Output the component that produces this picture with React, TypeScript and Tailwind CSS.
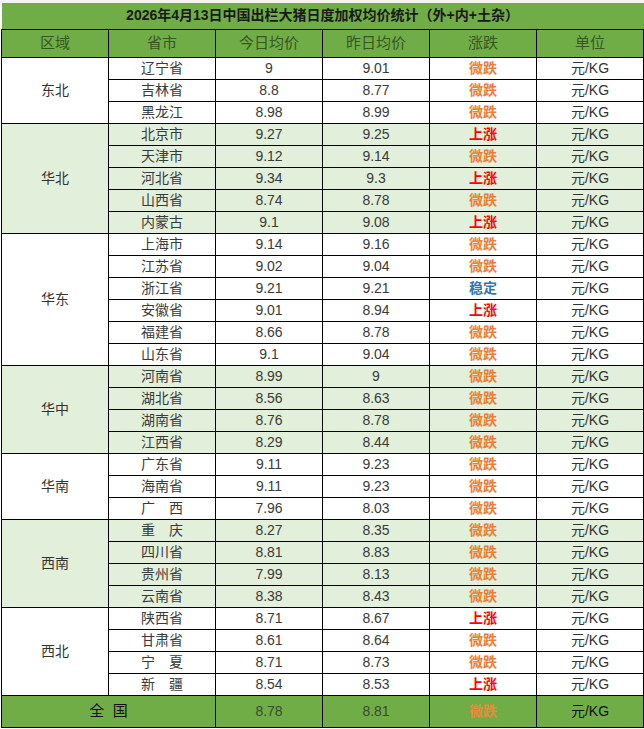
import React from "react";

type Row = { prov: string; today: string; yest: string; trend: string };
type Group = { region: string; shaded: boolean; rows: Row[] };

const GROUPS: Group[] = [
  {
    region: "东北",
    shaded: false,
    rows: [
      { prov: "辽宁省", today: "9", yest: "9.01", trend: "微跌" },
      { prov: "吉林省", today: "8.8", yest: "8.77", trend: "微跌" },
      { prov: "黑龙江", today: "8.98", yest: "8.99", trend: "微跌" },
    ],
  },
  {
    region: "华北",
    shaded: true,
    rows: [
      { prov: "北京市", today: "9.27", yest: "9.25", trend: "上涨" },
      { prov: "天津市", today: "9.12", yest: "9.14", trend: "微跌" },
      { prov: "河北省", today: "9.34", yest: "9.3", trend: "上涨" },
      { prov: "山西省", today: "8.74", yest: "8.78", trend: "微跌" },
      { prov: "内蒙古", today: "9.1", yest: "9.08", trend: "上涨" },
    ],
  },
  {
    region: "华东",
    shaded: false,
    rows: [
      { prov: "上海市", today: "9.14", yest: "9.16", trend: "微跌" },
      { prov: "江苏省", today: "9.02", yest: "9.04", trend: "微跌" },
      { prov: "浙江省", today: "9.21", yest: "9.21", trend: "稳定" },
      { prov: "安徽省", today: "9.01", yest: "8.94", trend: "上涨" },
      { prov: "福建省", today: "8.66", yest: "8.78", trend: "微跌" },
      { prov: "山东省", today: "9.1", yest: "9.04", trend: "微跌" },
    ],
  },
  {
    region: "华中",
    shaded: true,
    rows: [
      { prov: "河南省", today: "8.99", yest: "9", trend: "微跌" },
      { prov: "湖北省", today: "8.56", yest: "8.63", trend: "微跌" },
      { prov: "湖南省", today: "8.76", yest: "8.78", trend: "微跌" },
      { prov: "江西省", today: "8.29", yest: "8.44", trend: "微跌" },
    ],
  },
  {
    region: "华南",
    shaded: false,
    rows: [
      { prov: "广东省", today: "9.11", yest: "9.23", trend: "微跌" },
      { prov: "海南省", today: "9.11", yest: "9.23", trend: "微跌" },
      { prov: "广\u3000西", today: "7.96", yest: "8.03", trend: "微跌" },
    ],
  },
  {
    region: "西南",
    shaded: true,
    rows: [
      { prov: "重\u3000庆", today: "8.27", yest: "8.35", trend: "微跌" },
      { prov: "四川省", today: "8.81", yest: "8.83", trend: "微跌" },
      { prov: "贵州省", today: "7.99", yest: "8.13", trend: "微跌" },
      { prov: "云南省", today: "8.38", yest: "8.43", trend: "微跌" },
    ],
  },
  {
    region: "西北",
    shaded: false,
    rows: [
      { prov: "陕西省", today: "8.71", yest: "8.67", trend: "上涨" },
      { prov: "甘肃省", today: "8.61", yest: "8.64", trend: "微跌" },
      { prov: "宁\u3000夏", today: "8.71", yest: "8.73", trend: "微跌" },
      { prov: "新\u3000疆", today: "8.54", yest: "8.53", trend: "上涨" },
    ],
  },
];

function Trend({ t }: { t: string }) {
  if (t === "上涨") return <span className="font-bold text-[#ff0000]">{t}</span>;
  if (t === "稳定") return <span className="font-bold text-[#2e75b6]">{t}</span>;
  return <span className="font-bold text-[#ed7d31]">{t}</span>;
}

const cell = "border border-black p-0 text-center align-middle";

export default function App() {
  return (
    <div
      className="w-[644px] h-[729px] bg-white"
      style={{ fontFamily: '"Liberation Sans", "Noto Sans CJK SC", sans-serif' }}
    >
      <div className="h-[3px] bg-[#f3f3f3]" />
      <div className="pl-px">
        <table className="w-[642px] table-fixed border-collapse text-[14px] text-[#3a3a3a]">
          <colgroup>
            <col className="w-[107px]" />
            <col className="w-[107px]" />
            <col className="w-[107px]" />
            <col className="w-[107px]" />
            <col className="w-[107px]" />
            <col className="w-[107px]" />
          </colgroup>
          <thead>
            <tr className="h-[26px] bg-[#70ad47]">
              <th colSpan={6} className="border-x-0 border-t-0 border-b border-black p-0 text-center text-[14px] font-bold text-[#1a1a1a]">
                2026年4月13日中国出栏大猪日度加权均价统计（外+内+土杂）
              </th>
            </tr>
            <tr className="h-[28px] bg-[#70ad47] text-[15px] text-[#375623]">
              {["区域", "省市", "今日均价", "昨日均价", "涨跌", "单位"].map((h) => (
                <th key={h} className={`${cell} font-normal`}>
                  {h}
                </th>
              ))}
            </tr>
          </thead>
          <tbody>
            {GROUPS.map((g) =>
              g.rows.map((r, i) => (
                <tr key={g.region + r.prov} className={`h-[22px] ${g.shaded ? "bg-[#e2efda]" : "bg-white"}`}>
                  {i === 0 && (
                    <td rowSpan={g.rows.length} className={`${cell} text-[#333]`}>
                      {g.region}
                    </td>
                  )}
                  <td className={cell}>{r.prov}</td>
                  <td className={cell}>{r.today}</td>
                  <td className={cell}>{r.yest}</td>
                  <td className={cell}>
                    <Trend t={r.trend} />
                  </td>
                  <td className={`${cell} text-[#333]`}>元/KG</td>
                </tr>
              ))
            )}
            <tr className="h-[32px] bg-[#70ad47]">
              <td colSpan={2} className={`${cell} text-[15px] text-[#111]`}>
                全&nbsp;&nbsp;国
              </td>
              <td className={`${cell} text-[#3a4a30]`}>8.78</td>
              <td className={`${cell} text-[#3a4a30]`}>8.81</td>
              <td className={cell}>
                <span className="font-bold text-[#e98a3c]">微跌</span>
              </td>
              <td className={`${cell} text-[#111]`}>元/KG</td>
            </tr>
          </tbody>
        </table>
      </div>
    </div>
  );
}
